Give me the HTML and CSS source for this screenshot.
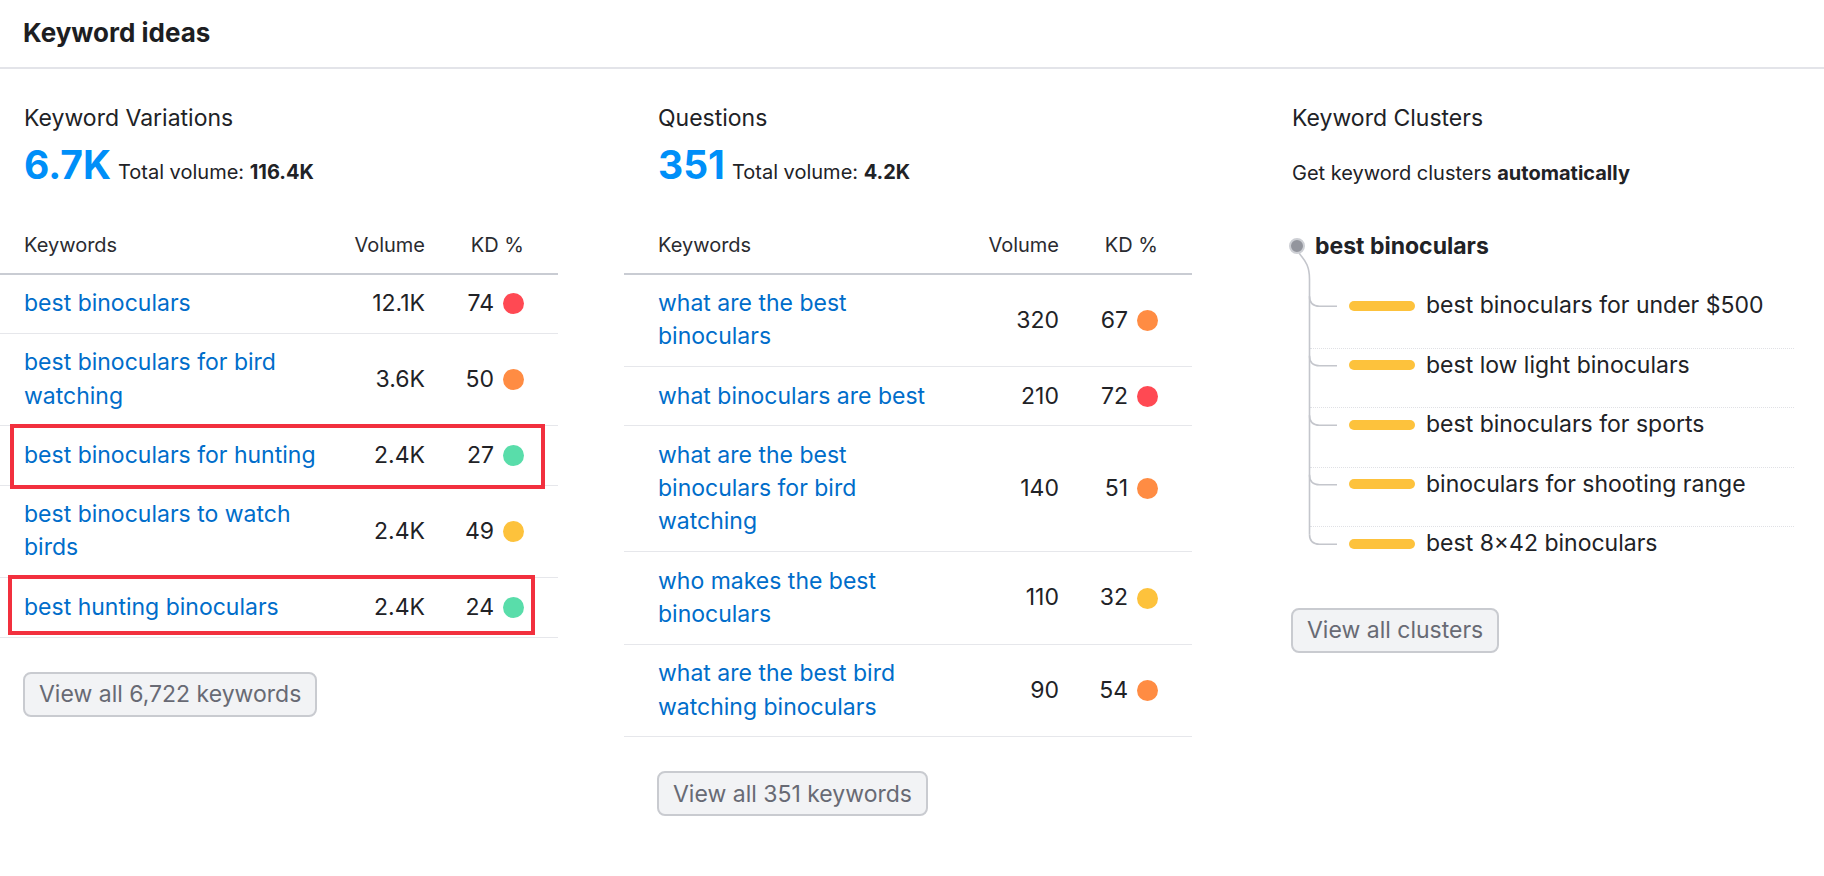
FILE: index.html
```html
<!DOCTYPE html>
<html lang="en">
<head>
    <meta charset="UTF-8">
    <title>Keyword ideas</title>
    <link rel="stylesheet" href="styles.css">
</head>
<body>
    <div class="panel">
        <div class="panel-header">
            <h1>Keyword ideas</h1>
        </div>

        <div class="columns">
            <!-- Keyword Variations -->
            <section class="col">
                <h2 class="col-title">Keyword Variations</h2>
                <div class="summary">
                    <span class="count">6.7K</span>
                    <span class="total">Total volume: <b>116.4K</b></span>
                </div>
                <div class="kw-table">
                    <div class="kw-row kw-head">
                        <span>Keywords</span><span class="vol">Volume</span><span class="kd">KD %</span>
                    </div>
                    <div class="kw-row kw-item">
                        <a href="#" class="kw">best binoculars</a><span class="vol">12.1K</span><span class="kd">74<i class="dot red"></i></span>
                    </div>
                    <div class="kw-row kw-item">
                        <a href="#" class="kw">best binoculars for bird watching</a><span class="vol">3.6K</span><span class="kd">50<i class="dot orange"></i></span>
                    </div>
                    <div class="kw-row kw-item flag flag-a">
                        <a href="#" class="kw">best binoculars for hunting</a><span class="vol">2.4K</span><span class="kd">27<i class="dot green"></i></span>
                    </div>
                    <div class="kw-row kw-item">
                        <a href="#" class="kw">best binoculars to watch birds</a><span class="vol">2.4K</span><span class="kd">49<i class="dot yellow"></i></span>
                    </div>
                    <div class="kw-row kw-item flag flag-b">
                        <a href="#" class="kw">best hunting binoculars</a><span class="vol">2.4K</span><span class="kd">24<i class="dot green"></i></span>
                    </div>
                </div>
                <button class="view-all">View all 6,722 keywords</button>
            </section>

            <!-- Questions -->
            <section class="col">
                <h2 class="col-title">Questions</h2>
                <div class="summary">
                    <span class="count">351</span>
                    <span class="total">Total volume: <b>4.2K</b></span>
                </div>
                <div class="kw-table">
                    <div class="kw-row kw-head">
                        <span>Keywords</span><span class="vol">Volume</span><span class="kd">KD %</span>
                    </div>
                    <div class="kw-row kw-item">
                        <a href="#" class="kw">what are the best binoculars</a><span class="vol">320</span><span class="kd">67<i class="dot orange"></i></span>
                    </div>
                    <div class="kw-row kw-item">
                        <a href="#" class="kw">what binoculars are best</a><span class="vol">210</span><span class="kd">72<i class="dot red"></i></span>
                    </div>
                    <div class="kw-row kw-item">
                        <a href="#" class="kw">what are the best binoculars for bird watching</a><span class="vol">140</span><span class="kd">51<i class="dot orange"></i></span>
                    </div>
                    <div class="kw-row kw-item">
                        <a href="#" class="kw">who makes the best binoculars</a><span class="vol">110</span><span class="kd">32<i class="dot yellow"></i></span>
                    </div>
                    <div class="kw-row kw-item">
                        <a href="#" class="kw">what are the best bird watching binoculars</a><span class="vol">90</span><span class="kd">54<i class="dot orange"></i></span>
                    </div>
                </div>
                <button class="view-all">View all 351 keywords</button>
            </section>

            <!-- Keyword Clusters -->
            <section class="col">
                <h2 class="col-title">Keyword Clusters</h2>
                <p class="cluster-note">Get keyword clusters <b>automatically</b></p>
                <div class="tree">
                    <svg class="tree-lines" width="50" height="340" viewBox="0 0 50 340">
                        <path d="M10 36 C14 42 20.5 46 20.5 62 V317.25" />
                        <path d="M20.5 79.25 Q20.5 89.25 30.5 89.25 H48" />
                        <path d="M20.5 138.75 Q20.5 148.75 30.5 148.75 H48" />
                        <path d="M20.5 198.25 Q20.5 208.25 30.5 208.25 H48" />
                        <path d="M20.5 257.75 Q20.5 267.75 30.5 267.75 H48" />
                        <path d="M20.5 317.25 Q20.5 327.25 30.5 327.25 H48" />
                    </svg>
                    <div class="tree-root">
                        <i class="root-dot"></i>
                        <span>best binoculars</span>
                    </div>
                    <div class="tree-item first"><div class="tree-line"><i class="bar"></i>best binoculars for under $500</div></div>
                    <div class="tree-item"><div class="tree-line"><i class="bar"></i>best low light binoculars</div></div>
                    <div class="tree-item"><div class="tree-line"><i class="bar"></i>best binoculars for sports</div></div>
                    <div class="tree-item"><div class="tree-line"><i class="bar"></i>binoculars for shooting range</div></div>
                    <div class="tree-item"><div class="tree-line"><i class="bar"></i>best 8×42 binoculars</div></div>
                </div>
                <button class="view-all">View all clusters</button>
            </section>
        </div>
    </div>
</body>
</html>
```

FILE: styles.css
```css
:root {
    --text: #212226;
    --link: #006dca;
    --accent: #008ff8;
    --line: #e6e7eb;
}

body {
    margin: 0;
    font-family: Inter, "Noto Sans", sans-serif;
    color: var(--text);
    background: #fff;
    overflow: hidden;
}

.panel-header {
    padding: 17px 23px 18px;
    border-bottom: 2px solid #e3e4e9;
}

.panel-header h1 {
    margin: 0;
    font-size: 26px;
    line-height: 32px;
    font-weight: 700;
    color: #1d1e22;
}

.columns {
    display: grid;
    grid-template-columns: repeat(3, 568px);
    column-gap: 66px;
    margin-left: -10px;
    padding-top: 33px;
}

.col-title {
    margin: 0;
    padding-left: 34px;
    font-size: 23px;
    font-weight: 400;
    line-height: 33.5px;
}

.summary {
    display: flex;
    align-items: baseline;
    gap: 7px;
    margin-top: 9px;
    padding-left: 34px;
    line-height: 1;
}

.count {
    font-size: 39px;
    font-weight: 700;
    color: var(--accent);
}

.total {
    font-size: 20px;
}

.kw-table {
    margin-top: 48px;
}

.kw-row {
    display: grid;
    grid-template-columns: 298px 103px 1fr;
    align-items: center;
    padding: 0 34px;
    position: relative;
}

.kw-row .vol {
    text-align: right;
}

.kw-row .kd {
    display: flex;
    justify-content: flex-end;
    align-items: center;
    gap: 9px;
}

.kw-head {
    font-size: 20px;
    line-height: 27px;
    padding-bottom: 14px;
    border-bottom: 2px solid #c9ccd3;
    color: #2a2b30;
}

.kw-item {
    font-size: 23px;
    line-height: 33.3px;
    padding-top: 12.5px;
    padding-bottom: 12.5px;
    border-bottom: 1px solid var(--line);
}

.kw {
    color: var(--link);
    text-decoration: none;
}

.dot {
    display: block;
    width: 21px;
    height: 21px;
    border-radius: 50%;
}

.dot.red { background: #ff4953; }
.dot.orange { background: #ff8c43; }
.dot.yellow { background: #fdc23c; }
.dot.green { background: #59ddaa; }

/* annotation boxes */
.flag::after {
    content: "";
    position: absolute;
    border: 4px solid #f2303e;
    pointer-events: none;
}

.flag-a::after {
    top: -2px;
    bottom: -4px;
    left: 20px;
    right: 13px;
}

.flag-b::after {
    top: -3px;
    bottom: 2px;
    left: 18px;
    right: 23px;
}

.view-all {
    display: block;
    margin: 34px 0 0 33px;
    height: 45px;
    padding: 0 14px;
    font-family: inherit;
    font-size: 23px;
    color: #686a74;
    background: #f2f3f5;
    border: 2px solid #c9cbd0;
    border-radius: 8px;
}

/* clusters */
.cluster-note {
    margin: 24px 0 0;
    padding-left: 34px;
    font-size: 20px;
    line-height: 27px;
}

.tree {
    position: relative;
    margin: 30px 0 0 31px;
}

.tree-lines {
    position: absolute;
    left: 0;
    top: 0;
    fill: none;
    stroke: #c4c6cc;
    stroke-width: 1.6;
}

.tree-root {
    position: relative;
    display: flex;
    align-items: center;
    gap: 10px;
    padding: 13px 0;
    font-size: 23px;
    font-weight: 700;
    line-height: 33.5px;
}

.root-dot {
    display: block;
    width: 16px;
    height: 16px;
    box-sizing: border-box;
    border-radius: 50%;
    background: #93959d;
    border: 2.5px solid #cdcfd4;
}

.tree-item {
    margin: 0 32px 0 21px;
    padding-top: 12px;
}

.tree-line {
    display: flex;
    align-items: center;
    gap: 11px;
    padding: 0 0 13px 39px;
    border-top: 1px dotted #e0e1e5;
    font-size: 23px;
    line-height: 33.5px;
}

.tree-item.first .tree-line {
    border-top-color: transparent;
}

.bar {
    display: block;
    width: 66px;
    height: 10px;
    border-radius: 5px;
    background: #fdc23c;
}
```
